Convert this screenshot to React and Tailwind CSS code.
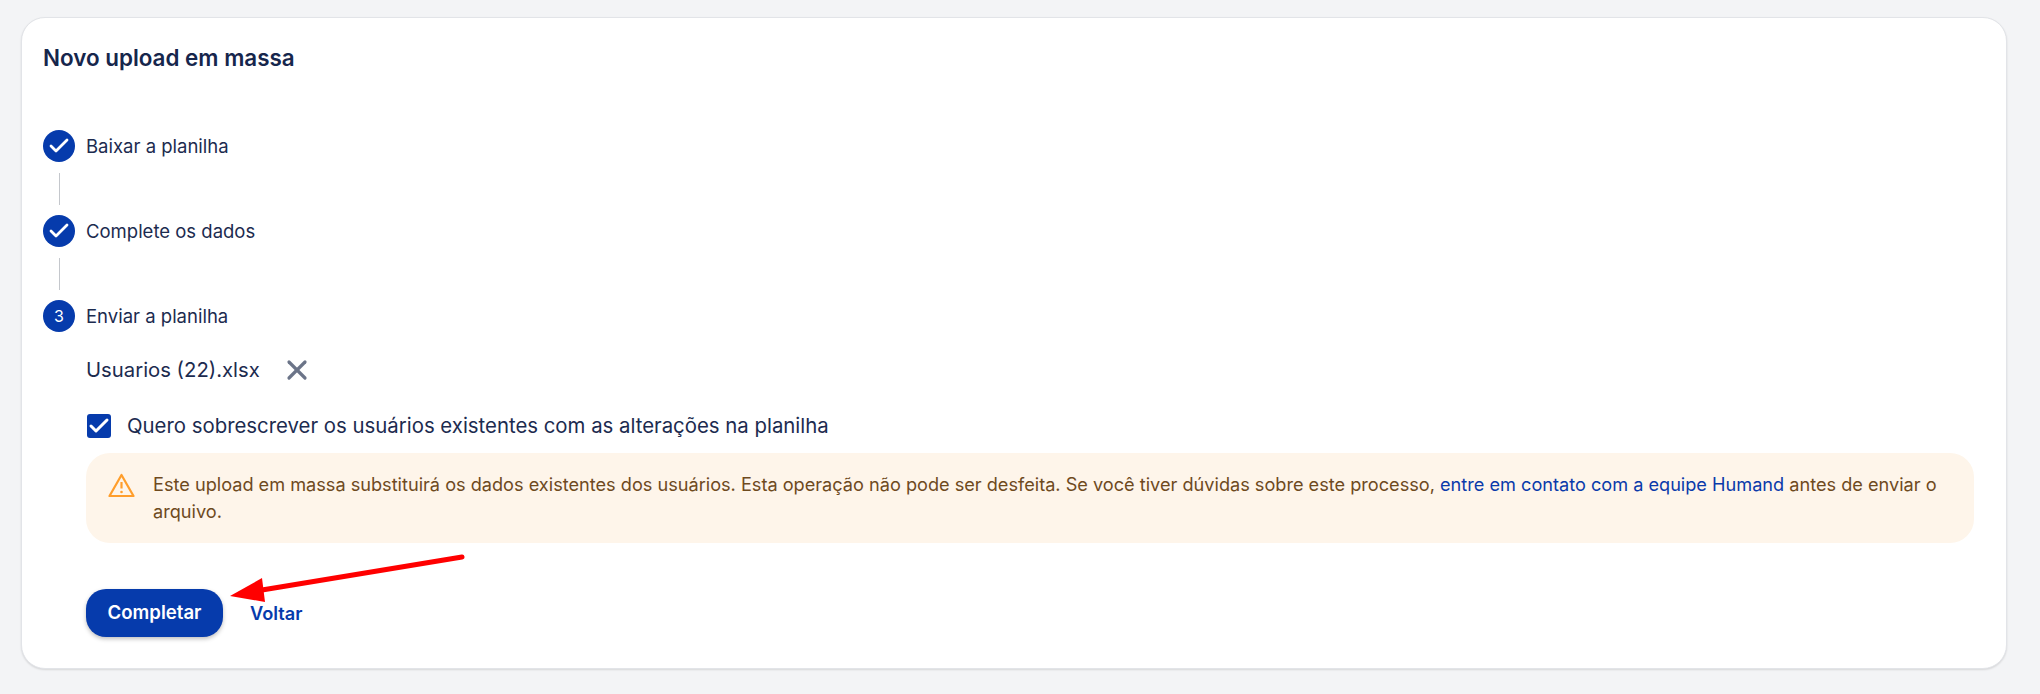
import { Check, X } from "lucide-react";

const font = { fontFamily: "Inter, sans-serif" };

function StepCircle({ children }) {
  return (
    <div className="flex h-8 w-8 shrink-0 items-center justify-center rounded-full bg-[#063BAC] text-[16px] text-white">
      {children}
    </div>
  );
}

function Step({ number, label }) {
  return (
    <div className="flex h-8 items-center gap-[11px]">
      <StepCircle>
        {number ? number : <Check size={24} strokeWidth={2.8} />}
      </StepCircle>
      <span className="text-[18.5px] leading-6 text-[#1C2B4F]">{label}</span>
    </div>
  );
}

function Connector() {
  return <div className="mb-[10px] ml-[15.5px] mt-[11px] h-8 w-px bg-[#C4C7CC]" />;
}

export default function App() {
  return (
    <div
      className="h-[694px] bg-[#F3F4F6] pl-[21px] pr-[33px] pt-[17px]"
      style={font}
    >
      <div className="relative h-[652px] rounded-3xl border border-[#E2E4E8] bg-white px-[21px] pt-[26px] shadow-[0_1px_2px_rgba(0,0,0,0.12)]">
        <h1 className="text-[22.4px] font-semibold leading-7 text-[#16264C]">
          Novo upload em massa
        </h1>

        {/* Steps */}
        <div className="mt-[58px]">
          <Step label="Baixar a planilha" />
          <Connector />
          <Step label="Complete os dados" />
          <Connector />
          <Step number="3" label="Enviar a planilha" />
        </div>

        {/* Upload */}
        <div className="ml-[43px] mr-[11px]">
          <div className="mt-[22px] flex h-8 items-center">
            <span className="text-[20.3px] text-[#1C2B4F]">Usuarios (22).xlsx</span>
            <X size={32} strokeWidth={2.4} className="ml-[21px] text-[#6B7488]" />
          </div>

          <div className="mt-[28px] flex h-6 items-center gap-4">
            <div className="ml-px flex h-6 w-6 items-center justify-center rounded-[3px] bg-[#063BAC]">
              <Check size={24} strokeWidth={3} className="text-white" />
            </div>
            <span className="text-[20.38px] text-[#1C2B4F]">
              Quero sobrescrever os usuários existentes com as alterações na planilha
            </span>
          </div>

          <div className="mt-[15px] flex h-[90px] gap-[18px] rounded-3xl bg-[#FEF5EA] pl-[22px] pr-8 pt-[18px]">
            <svg width="27" height="24" viewBox="0 0 27 24" fill="none" className="mt-[2px] shrink-0">
              <path d="M13.5 2 L25.5 23 H1.5 Z" stroke="#FF9E2C" strokeWidth="2.2" strokeLinejoin="round" />
              <path d="M13.5 9 V15.5" stroke="#FF9E2C" strokeWidth="2.2" />
              <circle cx="13.5" cy="19" r="1.3" fill="#FF9E2C" />
            </svg>
            <p className="text-[18.15px] leading-[27px] text-[#6E4A1E]">
              Este upload em massa substituirá os dados existentes dos usuários. Esta operação não pode ser desfeita. Se você tiver dúvidas sobre este processo,{" "}
              <a className="text-[#0A3AAA]">entre em contato com a equipe Humand</a>{" "}
              antes de enviar o arquivo.
            </p>
          </div>

          <div className="mt-[46px] flex items-center gap-[27px]">
            <button className="h-12 w-[137px] rounded-[20px] bg-[#063BAC] text-[18.6px] font-semibold text-white shadow-[0_2px_4px_rgba(0,0,0,0.25)]">
              Completar
            </button>
            <a className="mt-px text-[18.2px] font-semibold text-[#063BAC]">Voltar</a>
          </div>
        </div>

        {/* Annotation arrow */}
        <svg width="250" height="52" viewBox="0 0 250 52" className="absolute left-[206px] top-[536px]" fill="none">
          <path d="M234 3 L34 36" stroke="#FF0000" strokeWidth="5" strokeLinecap="round" />
          <path d="M2 42 L34 24 L37 48 Z" fill="#FF0000" />
        </svg>
      </div>
    </div>
  );
}
